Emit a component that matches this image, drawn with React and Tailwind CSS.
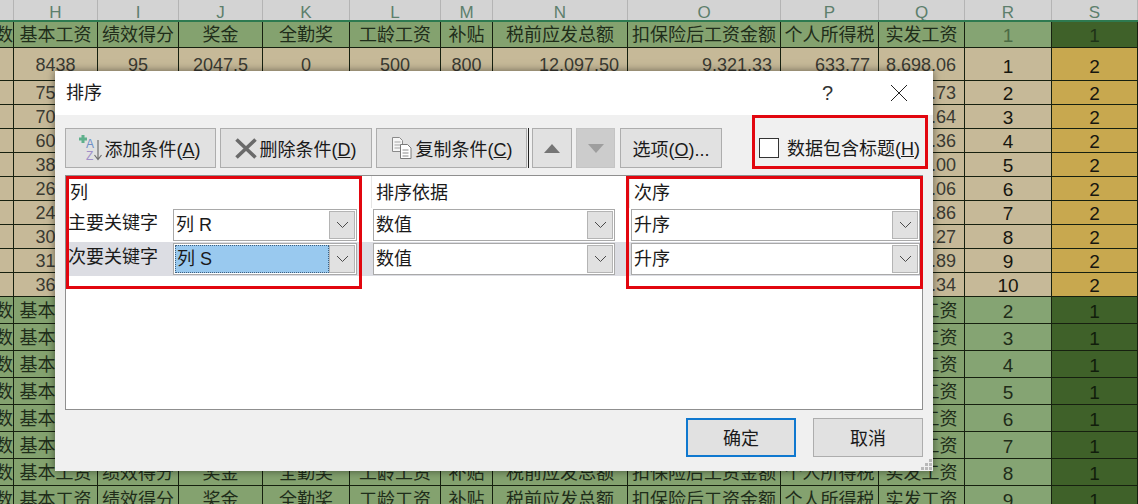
const colWidths = "grid-cols-[14px_84px_81px_84px_87px_91px_52px_135px_153px_98px_86px_87px_86px]";

const labels = ["数", "基本工资", "绩效得分", "奖金", "全勤奖", "工龄工资", "补贴", "税前应发总额", "扣保险后工资金额", "个人所得税", "实发工资"];
const letters = ["", "H", "I", "J", "K", "L", "M", "N", "O", "P", "Q", "R", "S"];

const tanRows = [
  ["7500", ".73", 2],
  ["7000", ".64", 3],
  ["6000", ".36", 4],
  ["3800", ".00", 5],
  ["2600", ".06", 6],
  ["2400", ".86", 7],
  ["3000", ".27", 8],
  ["3100", ".89", 9],
  ["3600", ".34", 10],
];

const greenRanks = [2, 3, 4, 5, 6, 7, 8, 9];

function Cell({ children, className = "" }) {
  return (
    <div className={`flex items-center justify-center overflow-hidden whitespace-nowrap border-r border-b border-[#16200f] pt-[2px] text-[18px] ${className}`}>
      {children}
    </div>
  );
}

function LabelRow({ rank, height, first }) {
  return (
    <div className={`grid ${colWidths} ${height}`}>
      {labels.map((t, i) => (
        <Cell key={i} className={`bg-[#84a26f] text-[#1f2d1a] ${i === 0 ? "justify-end" : ""}`}>{t}</Cell>
      ))}
      <Cell className={`!pt-[4px] text-[19px] ${first ? "bg-[#85a473] text-[#4c6b45]" : "bg-[#85a473] text-[#1f2c19]"}`}>{rank}</Cell>
      <Cell className={`!pt-[4px] bg-[#3f6129] text-[19px] ${first ? "text-[#1f3317]" : "text-[#111d0b]"}`}>1</Cell>
    </div>
  );
}

function Sheet() {
  return (
    <div className="flex h-[504px] w-[1138px] flex-col overflow-hidden bg-[#c6b998]">
      <div className={`grid ${colWidths} h-[20px] shrink-0 bg-[#d3d3d3]`}>
        {letters.map((l, i) => (
          <div key={i} className="flex items-center justify-center border-r border-[#b4b4b4] text-[17px] text-[#5d7f6c]">{l}</div>
        ))}
      </div>
      <div className="h-[2px] shrink-0 bg-[#2e7a50]"></div>
      <LabelRow rank={1} height="h-[26px] shrink-0" first />
      <div className={`grid ${colWidths} h-[33px] shrink-0 text-[#3a3a32]`}>
        <Cell></Cell>
        <Cell>8438</Cell>
        <Cell>95</Cell>
        <Cell>2047.5</Cell>
        <Cell>0</Cell>
        <Cell>500</Cell>
        <Cell>800</Cell>
        <Cell className="justify-end pr-2">12,097.50</Cell>
        <Cell className="justify-end pr-2">9,321.33</Cell>
        <Cell className="justify-end pr-2">633.77</Cell>
        <Cell className="justify-end pr-2">8,698.06</Cell>
        <Cell className="!pt-[6px] text-[19px] text-[#16160f]">1</Cell>
        <Cell className="!pt-[6px] bg-[#c8a84f] text-[19px] text-[#16160f]">2</Cell>
      </div>
      {tanRows.map((r) => (
        <div key={r[2]} className={`grid ${colWidths} h-[24px] shrink-0 text-[#3a3a32]`}>
          <Cell></Cell>
          <Cell>{r[0]}</Cell>
          <Cell></Cell>
          <Cell></Cell>
          <Cell></Cell>
          <Cell></Cell>
          <Cell></Cell>
          <Cell></Cell>
          <Cell></Cell>
          <Cell></Cell>
          <Cell className="justify-end pr-2">{r[1]}</Cell>
          <Cell className="!pt-[4px] text-[19px] text-[#16160f]">{r[2]}</Cell>
          <Cell className="!pt-[4px] bg-[#c8a84f] text-[19px] text-[#16160f]">2</Cell>
        </div>
      ))}
      {greenRanks.map((n) => (
        <LabelRow key={n} rank={n} height="h-[27px] shrink-0" />
      ))}
    </div>
  );
}

function AddIcon() {
  return (
    <svg width="26" height="30" viewBox="0 0 26 30" className="shrink-0">
      <path d="M2 6h8M6 2v8" stroke="#5fb08c" strokeWidth="3" />
      <text x="9" y="15" fontSize="12" fill="#6d8fc7" fontFamily="Liberation Sans">A</text>
      <text x="9" y="27" fontSize="12" fill="#a08fc8" fontFamily="Liberation Sans">Z</text>
      <path d="M21 7v19M17.5 22l3.5 4.5 3.5-4.5" stroke="#6f6f6f" strokeWidth="1.2" fill="none" />
    </svg>
  );
}

function DeleteIcon() {
  return (
    <svg width="22" height="21" viewBox="0 0 22 21" className="shrink-0">
      <path d="M1.5 1.5l19 18M20.5 1.5l-19 18" stroke="#6a6a6a" strokeWidth="3.6" />
    </svg>
  );
}

function CopyIcon() {
  return (
    <svg width="21" height="22" viewBox="0 0 21 22" className="shrink-0">
      <path d="M1.5 0.5h7l3 3v11h-10z" fill="#f6f6f6" stroke="#8a8a8a" />
      <path d="M3.5 5h6M3.5 8h6M3.5 11h6" stroke="#a5a5a5" />
      <path d="M9.5 7.5h7l3.5 3.5v10.5h-10.5z" fill="#fff" stroke="#7a7a7a" />
      <path d="M11.5 13h6M11.5 16h6M11.5 19h6" stroke="#8a8a8a" />
    </svg>
  );
}

function ToolButton({ children, className = "" }) {
  return (
    <button className={`flex h-[40px] items-center justify-center border border-[#adadad] bg-[#e1e1e1] text-[18px] text-[#1a1a1a] ${className}`}>
      {children}
    </button>
  );
}

function Combo({ value, selected, className = "" }) {
  return (
    <div className={`flex h-[32px] items-center border border-[#a9a9a9] bg-white p-[1px] ${className}`}>
      <div className={`flex h-full min-w-0 flex-1 items-center pl-[1px] text-[18px] text-[#1a1a1a] ${selected ? "border border-dotted border-[#3d5f80] bg-[#99c9ef]" : ""}`}>
        {value}
      </div>
      <div className="flex h-full w-[26px] shrink-0 items-center justify-center border border-[#b4b4b4] bg-[#e1e1e1]">
        <svg width="13" height="8" viewBox="0 0 13 8">
          <path d="M1 1l5.5 5.5L12 1" stroke="#4a4a4a" fill="none" />
        </svg>
      </div>
    </div>
  );
}

function SortRow({ label, keyValue, selected }) {
  return (
    <div className={`flex h-[34px] items-center ${selected ? "bg-[#dcdde3]" : ""}`}>
      <div className="w-[107px] shrink-0 pb-[4px] pl-[2px] text-[18px] text-[#1a1a1a]">{label}</div>
      <Combo value={keyValue} selected={selected} className="w-[184px] shrink-0" />
      <Combo value="数值" className="ml-[16px] w-[242px] shrink-0" />
      <Combo value="升序" className="ml-[16px] w-[289px] shrink-0" />
    </div>
  );
}

function Dialog() {
  return (
    <div className="absolute left-[55px] top-[71px] flex h-[400px] w-[878px] flex-col bg-[#f0f0f0] shadow-[0_0_8px_rgba(0,0,0,0.5)]">
      <div className="flex h-[44px] shrink-0 items-center justify-between bg-white pl-[11px] pr-[25px]">
        <span className="text-[18px] text-[#1a1a1a]">排序</span>
        <div className="flex items-center gap-[57px]">
          <span className="text-[20px] text-[#333]">?</span>
          <svg width="18" height="18" viewBox="0 0 18 18">
            <path d="M1 1l16 16M17 1L1 17" stroke="#222" strokeWidth="1" />
          </svg>
        </div>
      </div>

      <div className="flex shrink-0 items-center pl-[10px] pt-[13px]">
        <ToolButton className="w-[151px] gap-[1px] pr-[3px]"><AddIcon /><span className="pt-[4px]">添加条件(<u>A</u>)</span></ToolButton>
        <ToolButton className="ml-[4px] w-[152px] gap-[3px] pr-[1px]"><DeleteIcon /><span className="pt-[4px]">删除条件(<u>D</u>)</span></ToolButton>
        <ToolButton className="ml-[4px] w-[151px] gap-[4px]"><CopyIcon /><span className="pt-[4px]">复制条件(<u>C</u>)</span></ToolButton>
        <div className="ml-[1px] h-[40px] w-[1px] bg-[#222]"></div>
        <ToolButton className="ml-[3px] w-[40px]">
          <svg width="16" height="9" viewBox="0 0 16 9"><path d="M8 0l8 9H0z" fill="#757575" /></svg>
        </ToolButton>
        <ToolButton className="ml-[4px] w-[39px] !border-[#c4c4c4] !bg-[#cccccc]">
          <svg width="16" height="9" viewBox="0 0 16 9"><path d="M0 0h16L8 9z" fill="#9e9e9e" /></svg>
        </ToolButton>
        <ToolButton className="ml-[5px] w-[102px]"><span className="pt-[4px]">选项(<u>O</u>)...</span></ToolButton>
        <div className="ml-[37px] flex items-center gap-[8px]">
          <div className="h-[20px] w-[20px] border border-[#333] bg-white"></div>
          <span className="whitespace-nowrap pt-[2px] text-[18px] text-[#1a1a1a]">数据包含标题(<u>H</u>)</span>
        </div>
      </div>

      <div className="mx-[10px] mt-[7px] h-[235px] shrink-0 border border-[#8f8f8f] bg-white">
        <div className="flex h-[32px] text-[18px] text-[#1a1a1a]">
          <span className="w-[305px] pl-[4px] pt-[4px]">列</span>
          <span className="w-[258px] border-l border-[#e5e5e5] pl-[4px] pt-[4px]">排序依据</span>
          <span className="border-l border-[#e5e5e5] pl-[4px] pt-[4px]">次序</span>
        </div>
        <SortRow label="主要关键字" keyValue="列 R" />
        <SortRow label="次要关键字" keyValue="列 S" selected />
      </div>

      <div className="relative flex flex-1 items-start justify-end gap-[17px] pr-[10px] pt-[8px]">
        <button className="h-[39px] w-[110px] border-[2px] border-[#0f78cf] bg-[#e1e1e1] pt-[3px] text-[18px] text-[#1a1a1a]">确定</button>
        <button className="h-[39px] w-[110px] border border-[#adadad] bg-[#e1e1e1] pt-[3px] text-[18px] text-[#1a1a1a]">取消</button>
        <svg width="12" height="12" viewBox="0 0 12 12" className="absolute bottom-0 right-0">
          <path d="M8 0h3v3H8zM4 4h3v3H4zM8 4h3v3H8zM0 8h3v3H0zM4 8h3v3H4zM8 8h3v3H8z" fill="#b9b9b9" />
        </svg>
      </div>

      {/* red annotation boxes sit on top of the dialog */}
      <div className="absolute left-[11px] top-[105px] h-[113px] w-[296px] border-[3px] border-[#e2060f]"></div>
      <div className="absolute left-[571px] top-[105px] h-[113px] w-[297px] border-[3px] border-[#e2060f]"></div>
      <div className="absolute left-[697px] top-[44px] h-[54px] w-[176px] border-[3px] border-[#e2060f]"></div>
    </div>
  );
}

export default function App() {
  return (
    <div className="relative h-[504px] w-[1138px] overflow-hidden font-['Liberation_Sans','Noto_Sans_CJK_SC',sans-serif]">
      <Sheet />
      <Dialog />
    </div>
  );
}
